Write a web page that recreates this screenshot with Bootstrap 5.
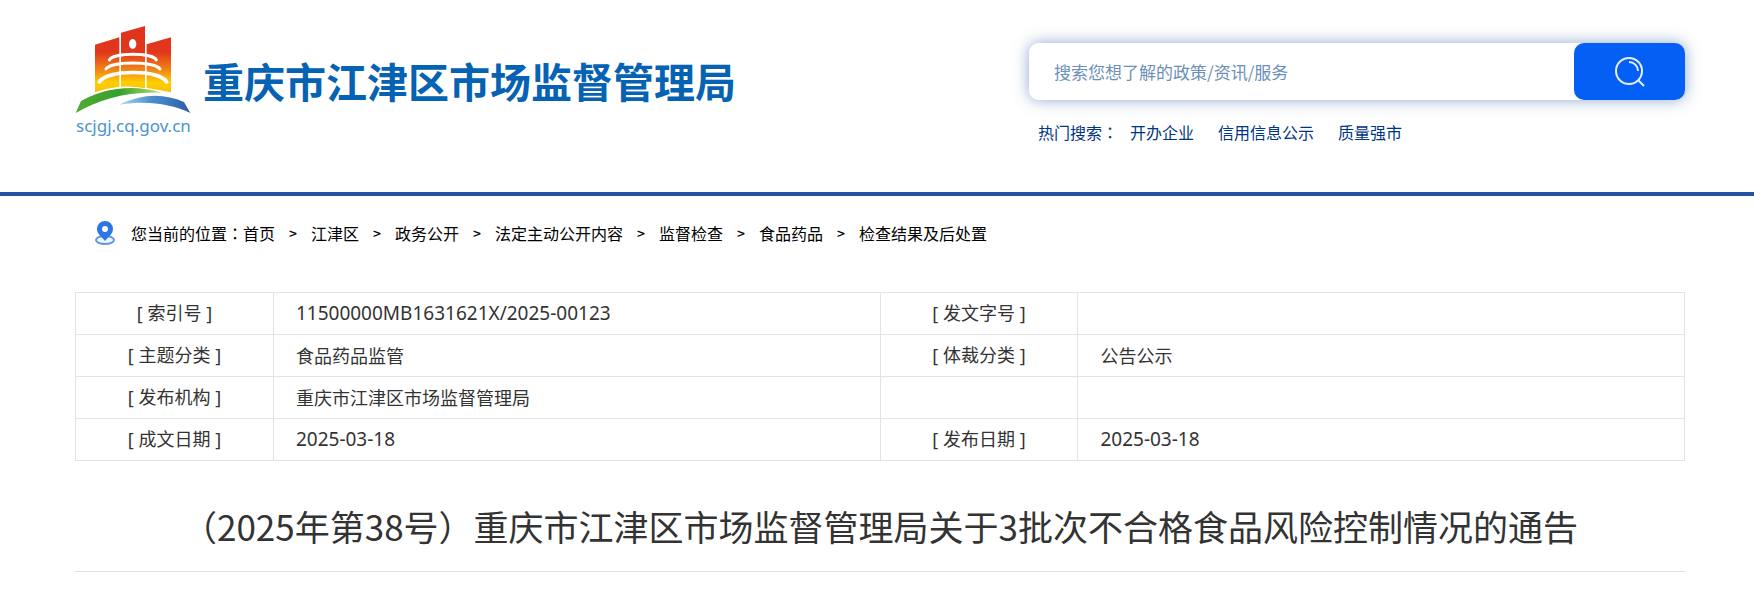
<!DOCTYPE html>
<html lang="zh-CN">
<head>
<meta charset="utf-8">
<meta name="viewport" content="width=device-width, initial-scale=1">
<title>重庆市江津区市场监督管理局</title>
<link href="https://cdn.jsdelivr.net/npm/bootstrap@5.3.0/dist/css/bootstrap.min.css" rel="stylesheet">
<style>
  body { font-family: "Noto Sans CJK SC", sans-serif; font-size: 16px; line-height: 24px; color: #333; background: #fff; }
  .page-wrap { padding-left: 75px; padding-right: 69px; }
  .site-header { border-bottom: 4px solid #2354a0; padding-top: 24px; padding-bottom: 48px; }
  .brand-mark { width: 118px; }
  .brand-mark svg { display: block; width: 118px; height: 90px; }
  .brand-domain { font: 17px/24px "Noto Sans", sans-serif; color: #4794d2; white-space: nowrap; padding-left: 1px; }
  .brand-name { font-size: 41px; line-height: 60px; font-weight: 700; color: #0662b3; white-space: nowrap; padding: 26px 0 0 10px; }
  .search-area { width: 656px; max-width: 50%; margin-top: 19px; }
  .search-box { height: 57px; border-radius: 10px; box-shadow: 0 0 15px rgba(35, 84, 160, .5); }
  .search-box .form-control { border: 0; border-radius: 10px; padding: 0 25px; font-size: 17px; color: #333; box-shadow: none; }
  .search-box .form-control::placeholder { color: #6b8fb8; opacity: 1; }
  .search-btn { width: 111px; border-radius: 10px; background: #0460f5; border: 0; }
  .hot-row { margin-top: 20px; padding-left: 9px; color: #003584; }
  .hot-row a { color: #003584; text-decoration: none; }
  .colon-mid { font-family: "Noto Sans CJK TC", sans-serif; }
  .crumb-row { padding: 25px 0 0 20px; color: #000; }
  .crumb-row a { color: #000; text-decoration: none; }
  .crumb-row .breadcrumb { --bs-breadcrumb-divider: ">"; --bs-breadcrumb-divider-color: #000; --bs-breadcrumb-item-padding-x: 14px; }
  .crumb-row .breadcrumb-item + .breadcrumb-item::before { font-size: 14px; font-weight: 500; }
  .info-table { margin: 47px 0 0; table-layout: fixed; border-color: #e2e3e5; font-size: 18px; line-height: 25px; }
  .info-table th, .info-table td { height: 42px; padding: 8px 22px; color: #333; font-weight: 400; vertical-align: middle; }
  .info-table th { text-align: center; padding: 8px 0; font-family: "Noto Sans", "Noto Sans CJK SC", sans-serif; }
  .info-table .col-label { width: 12.3%; }
  .info-table .num-cell { font-family: "Noto Sans", sans-serif; font-size: 19px; }
  .doc-title { margin: 0; padding: 39px 0 19px; font-size: 35px; line-height: 52px; font-weight: 400; text-align: center; color: #333; border-bottom: 1px solid #e2e3e5; }
</style>
</head>
<body>
<header class="site-header page-wrap d-flex justify-content-between align-items-start">
  <div class="d-flex">
    <div class="brand-mark">
      <svg viewBox="45 42 354 270" aria-hidden="true">
        <defs>
          <linearGradient id="tower" gradientUnits="userSpaceOnUse" x1="0" y1="48" x2="0" y2="246">
            <stop offset="0" stop-color="#df321e"/><stop offset=".4" stop-color="#e1381c"/><stop offset=".68" stop-color="#f28a16"/><stop offset=".86" stop-color="#ffcf00"/><stop offset="1" stop-color="#f8bd08"/>
          </linearGradient>
          <linearGradient id="hill" x1="0" x2="1"><stop offset="0" stop-color="#55a936"/><stop offset=".5" stop-color="#35a02c"/><stop offset="1" stop-color="#b9dc6c"/></linearGradient>
          <linearGradient id="river" x1="0" x2="1"><stop offset="0" stop-color="#a9d5f2"/><stop offset=".45" stop-color="#4c8fce"/><stop offset="1" stop-color="#2b5ca8"/></linearGradient>
        </defs>
        <path fill="url(#tower)" d="M105 104 178 82V230Q140 234 105 247ZM183 68 255 48V235Q220 228 183 230ZM260 103 333 82V247Q300 240 260 234Z"/>
        <ellipse cx="218" cy="102" rx="11" ry="15" fill="#fff"/>
        <g fill="none" stroke="#fff" stroke-width="9" stroke-linecap="round">
          <path d="M148 150C160 127 278 127 289 150"/>
          <path d="M138 177C155 153 282 153 300 177"/>
          <path d="M118 216C140 178 300 178 320 216" stroke-width="11"/>
        </g>
        <path fill="url(#hill)" d="M47 309 63 273C125 236 218 220 305 248 200 243 115 269 47 309Z"/>
        <path fill="url(#river)" d="M178 284C250 249 313 250 372 276L391 309C330 281 263 271 178 284Z"/>
      </svg>
      <div class="brand-domain">scjgj.cq.gov.cn</div>
    </div>
    <div class="brand-name">重庆市江津区市场监督管理局</div>
  </div>
  <div class="search-area">
    <form class="search-box d-flex" role="search">
      <input type="text" class="form-control" aria-label="搜索" placeholder="搜索您想了解的政策/资讯/服务">
      <button type="button" class="search-btn btn btn-primary flex-shrink-0" aria-label="搜索">
        <svg width="30" height="30" viewBox="0 0 30 30" fill="none" stroke="#e4eeff" stroke-width="2" aria-hidden="true"><circle cx="14" cy="14" r="13"/><path d="M14 5A9 9 0 0 1 23 14M23 23 29 29"/></svg>
      </button>
    </form>
    <div class="hot-row d-flex">
      <span class="me-2 pe-1">热门搜索<span class="colon-mid" lang="zh-TW">：</span></span>
      <div class="d-flex gap-4"><a href="#">开办企业</a><a href="#">信用信息公示</a><a href="#">质量强市</a></div>
    </div>
  </div>
</header>
<main class="page-wrap">
  <nav class="crumb-row d-flex align-items-center" aria-label="breadcrumb">
    <svg class="me-3" width="20" height="24" viewBox="0 0 20 24" aria-hidden="true">
      <ellipse cx="10" cy="19" rx="9" ry="4" fill="#eef5ff" stroke="#5f97df" stroke-width="2"/>
      <path fill="#2b78e4" d="M10 20C7 16 2 13 2 8A8 8 0 0 1 18 8C18 13 13 16 10 20Z"/><circle cx="10" cy="8" r="3" fill="#fff"/>
    </svg>
    <span>您当前的位置<span class="colon-mid" lang="zh-TW">：</span></span>
    <ol class="breadcrumb mb-0">
      <li class="breadcrumb-item"><a href="#">首页</a></li>
      <li class="breadcrumb-item"><a href="#">江津区</a></li>
      <li class="breadcrumb-item"><a href="#">政务公开</a></li>
      <li class="breadcrumb-item"><a href="#">法定主动公开内容</a></li>
      <li class="breadcrumb-item"><a href="#">监督检查</a></li>
      <li class="breadcrumb-item"><a href="#">食品药品</a></li>
      <li class="breadcrumb-item"><a href="#">检查结果及后处置</a></li>
    </ol>
  </nav>
  <table class="table table-bordered info-table">
    <colgroup><col class="col-label"><col><col class="col-label"><col></colgroup>
    <tbody>
      <tr><th scope="row">[ 索引号 ]</th><td class="num-cell">11500000MB1631621X/2025-00123</td><th scope="row">[ 发文字号 ]</th><td></td></tr>
      <tr><th scope="row">[ 主题分类 ]</th><td>食品药品监管</td><th scope="row">[ 体裁分类 ]</th><td>公告公示</td></tr>
      <tr><th scope="row">[ 发布机构 ]</th><td>重庆市江津区市场监督管理局</td><td></td><td></td></tr>
      <tr><th scope="row">[ 成文日期 ]</th><td class="num-cell">2025-03-18</td><th scope="row">[ 发布日期 ]</th><td class="num-cell">2025-03-18</td></tr>
    </tbody>
  </table>
  <h1 class="doc-title">（2025年第38号）重庆市江津区市场监督管理局关于3批次不合格食品风险控制情况的通告</h1>
</main>
<script src="https://cdn.jsdelivr.net/npm/bootstrap@5.3.0/dist/js/bootstrap.bundle.min.js"></script>
</body>
</html>
